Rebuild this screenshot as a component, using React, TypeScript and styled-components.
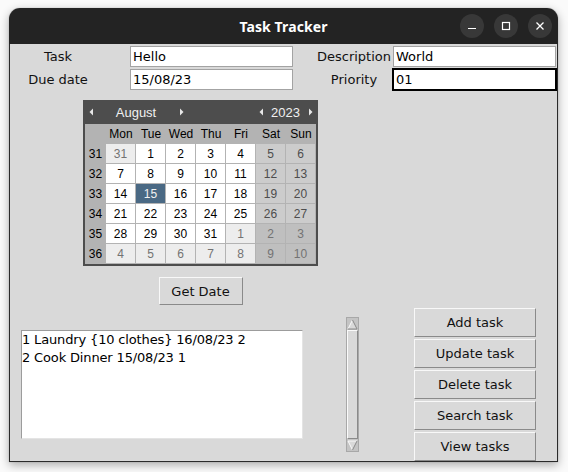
import React from "react";
import styled, { createGlobalStyle } from "styled-components";

const Global = createGlobalStyle`
  html, body { margin: 0; padding: 0; background: #ffffff; }
  body { width: 568px; height: 472px; overflow: hidden; }
  * { box-sizing: border-box; }
`;

const Page = styled.div`
  width: 568px;
  height: 472px;
  padding: 8px 0 0 9px;
  background: #fafafa;
`;

const Window = styled.div`
  width: 549px;
  height: 454px;
  display: flex;
  flex-direction: column;
  border-radius: 11px 11px 0 0;
  box-shadow: 0 3px 10px rgba(0, 0, 0, 0.32), 0 0 1px rgba(0, 0, 0, 0.4);
  overflow: hidden;
`;

const TitleBar = styled.div`
  height: 36px;
  flex: none;
  background: #232323;
  display: grid;
  grid-template-columns: 1fr auto 1fr;
  align-items: center;
`;

const Title = styled.div`
  grid-column: 2;
  color: #ffffff;
  font-family: "Noto Sans", "DejaVu Sans", sans-serif;
  font-weight: 700;
  font-size: 14px;
  letter-spacing: 0.1px;
`;

const Controls = styled.div`
  grid-column: 3;
  justify-self: end;
  display: flex;
  gap: 10px;
  padding-right: 6px;
`;

const CtrlButton = styled.div`
  width: 24px;
  height: 24px;
  border-radius: 50%;
  background: #383838;
  display: flex;
  align-items: center;
  justify-content: center;
`;

const Body = styled.div`
  flex: 1;
  background: #d9d9d9;
  border: 1px solid #2a2a2a;
  border-top: none;
  display: flex;
  flex-direction: column;
  font-family: "DejaVu Sans", sans-serif;
  font-size: 13px;
  color: #000;
`;

const Form = styled.div`
  margin-top: 1px;
  display: grid;
  grid-template-columns: 119px 165px 98px 165px;
  grid-template-rows: 23px 23px;
`;

const Label = styled.div<{ $side: "left" | "right" }>`
  display: flex;
  align-items: center;
  justify-content: center;
  padding: ${(p) => (p.$side === "left" ? "0 23px 0 0" : "0 0 0 22px")};
  white-space: nowrap;
  color: #111;
`;

const Entry = styled.div<{ $focused?: boolean }>`
  border: 1px solid ${(p) => (p.$focused ? "#000" : "#d9d9d9")};
  box-shadow: inset 0 0 0 1px ${(p) => (p.$focused ? "#000" : "#a3a3a3")};
  background: #fff;
  padding: 0 3px;
  display: flex;
  align-items: center;
  color: #000;
`;

const CalSection = styled.div`
  margin-top: 9px;
  padding-left: 73px;
  width: 308px;
  display: flex;
  flex-direction: column;
  align-items: center;
`;

const Calendar = styled.div`
  width: 235px;
  background: #4d4d4d;
  padding: 0 2px 2px 2px;
  font-family: "Liberation Sans", Arial, sans-serif;
`;

const CalHeader = styled.div`
  height: 24px;
  display: flex;
  align-items: center;
  color: #f0f0f0;
  font-size: 13px;
`;

const ArrowBox = styled.div`
  width: 12px;
  display: flex;
  justify-content: center;
  align-items: center;
`;

const MonthLabel = styled.div<{ $w: number }>`
  width: ${(p) => p.$w}px;
  text-align: center;
`;

const Spacer = styled.div`
  flex: 1;
`;

const CalGrid = styled.div`
  display: grid;
  grid-template-columns: 21px repeat(7, 30px);
  grid-template-rows: repeat(7, 20px);
  background: #b3b3b3;
  font-size: 12px;
`;

const HeadCell = styled.div`
  display: flex;
  align-items: center;
  justify-content: center;
  color: #000;
`;

type Kind = "normal" | "weekend" | "other" | "otherwe" | "selected";

const dayColors: Record<Kind, [string, string]> = {
  normal: ["#ffffff", "#000000"],
  weekend: ["#cccccc", "#4d4d4d"],
  other: ["#ededed", "#737373"],
  otherwe: ["#bfbfbf", "#737373"],
  selected: ["#4a6984", "#f2f2f2"],
};

const DayCell = styled.div<{ $kind: Kind }>`
  display: flex;
  align-items: center;
  justify-content: center;
  border-right: 1px solid #b3b3b3;
  border-bottom: 1px solid #b3b3b3;
  background: ${(p) => dayColors[p.$kind][0]};
  color: ${(p) => dayColors[p.$kind][1]};
  padding-top: 1px;
`;

const TkButton = styled.div<{ $w: number; $h: number }>`
  width: ${(p) => p.$w}px;
  height: ${(p) => p.$h}px;
  background: #d9d9d9;
  border: 1px solid;
  border-color: #f8f8f8 #8a8a8a #8a8a8a #f8f8f8;
  display: flex;
  align-items: center;
  justify-content: center;
  color: #111;
  white-space: nowrap;
`;

const GetDateWrap = styled.div`
  margin-top: 11px;
`;

const BottomRow = styled.div`
  margin-top: 3px;
  height: 153px;
  display: flex;
  align-items: center;
  padding-left: 11px;
`;

const ListBox = styled.div`
  width: 282px;
  height: 109px;
  background: #fff;
  border: 1px solid;
  border-color: #9c9c9c #e4e4e4 #e4e4e4 #9c9c9c;
  padding: 0 0;
  line-height: 18px;
  letter-spacing: -0.15px;
  color: #000;
  white-space: nowrap;
`;

const Scrollbar = styled.div`
  margin-left: 43px;
  width: 13px;
  height: 135px;
  border: 1px solid #a8a8a8;
  background: #c4c4c4;
  display: flex;
  flex-direction: column;
`;

const ScrollArrow = styled.div`
  height: 12px;
  flex: none;
  display: flex;
  align-items: center;
  justify-content: center;
`;

const ScrollThumb = styled.div`
  flex: 1;
  background: #d9d9d9;
  border: 1px solid;
  border-color: #fafafa #8a8a8a #8a8a8a #fafafa;
`;

const ButtonCol = styled.div`
  margin-left: 55px;
  display: flex;
  flex-direction: column;
  gap: 2px;
`;

const Tri = ({ dir }: { dir: "left" | "right" }) => (
  <svg width="5" height="8" viewBox="0 0 5 8">
    {dir === "left" ? (
      <polygon points="4,0.5 4,7.5 0.5,4" fill="#e8e8e8" />
    ) : (
      <polygon points="1,0.5 1,7.5 4.5,4" fill="#e8e8e8" />
    )}
  </svg>
);

const ScrollTri = ({ up }: { up: boolean }) => (
  <svg width="11" height="11" viewBox="0 0 11 11">
    {up ? (
      <>
        <polygon points="5.5,1 10,10 1,10" fill="#d9d9d9" />
        <polyline points="1,10 5.5,1" stroke="#fafafa" fill="none" strokeWidth="1" />
        <polyline points="5.5,1 10,10 1,10" stroke="#8a8a8a" fill="none" strokeWidth="1" />
      </>
    ) : (
      <>
        <polygon points="1,1 10,1 5.5,10" fill="#d9d9d9" />
        <polyline points="5.5,10 1,1 10,1" stroke="#fafafa" fill="none" strokeWidth="1" />
        <polyline points="10,1 5.5,10" stroke="#8a8a8a" fill="none" strokeWidth="1" />
      </>
    )}
  </svg>
);

type Cell = { d: number; k: Kind };

const weeks: { wk: number; days: Cell[] }[] = (() => {
  const rows: { wk: number; days: Cell[] }[] = [];
  let day = 31;
  let month = -1;
  for (let w = 0; w < 6; w++) {
    const days: Cell[] = [];
    for (let i = 0; i < 7; i++) {
      const we = i >= 5;
      let k: Kind;
      if (month === 0) k = we ? "weekend" : "normal";
      else k = we ? "otherwe" : "other";
      if (month === 0 && day === 15) k = "selected";
      days.push({ d: day, k });
      day++;
      if (month === -1 && day > 31) {
        day = 1;
        month = 0;
      } else if (month === 0 && day > 31) {
        day = 1;
        month = 1;
      }
    }
    rows.push({ wk: 31 + w, days });
  }
  return rows;
})();

const dayNames = ["Mon", "Tue", "Wed", "Thu", "Fri", "Sat", "Sun"];
const actions = ["Add task", "Update task", "Delete task", "Search task", "View tasks"];

export default function App() {
  return (
    <>
      <Global />
      <Page>
        <Window>
          <TitleBar>
            <Title>Task Tracker</Title>
            <Controls>
              <CtrlButton>
                <svg width="10" height="10" viewBox="0 0 10 10">
                  <line x1="1" y1="7.5" x2="9" y2="7.5" stroke="#fff" strokeWidth="1.2" />
                </svg>
              </CtrlButton>
              <CtrlButton>
                <svg width="10" height="10" viewBox="0 0 10 10">
                  <rect x="1.5" y="1.5" width="7" height="7" stroke="#fff" strokeWidth="1.2" fill="none" />
                </svg>
              </CtrlButton>
              <CtrlButton>
                <svg width="10" height="10" viewBox="0 0 10 10">
                  <path d="M1.5 1.5 L8.5 8.5 M8.5 1.5 L1.5 8.5" stroke="#fff" strokeWidth="1.3" />
                </svg>
              </CtrlButton>
            </Controls>
          </TitleBar>
          <Body>
            <Form>
              <Label $side="left">Task</Label>
              <Entry>Hello</Entry>
              <Label $side="right">Description</Label>
              <Entry>World</Entry>
              <Label $side="left">Due date</Label>
              <Entry>15/08/23</Entry>
              <Label $side="right">Priority</Label>
              <Entry $focused>01</Entry>
            </Form>
            <CalSection>
              <Calendar>
                <CalHeader>
                  <ArrowBox>
                    <Tri dir="left" />
                  </ArrowBox>
                  <MonthLabel $w={78}>August</MonthLabel>
                  <ArrowBox>
                    <Tri dir="right" />
                  </ArrowBox>
                  <Spacer />
                  <ArrowBox>
                    <Tri dir="left" />
                  </ArrowBox>
                  <MonthLabel $w={37}>2023</MonthLabel>
                  <ArrowBox>
                    <Tri dir="right" />
                  </ArrowBox>
                </CalHeader>
                <CalGrid>
                  <HeadCell />
                  {dayNames.map((n) => (
                    <HeadCell key={n}>{n}</HeadCell>
                  ))}
                  {weeks.map((w) => (
                    <React.Fragment key={w.wk}>
                      <HeadCell>{w.wk}</HeadCell>
                      {w.days.map((c, i) => (
                        <DayCell key={i} $kind={c.k}>
                          {c.d}
                        </DayCell>
                      ))}
                    </React.Fragment>
                  ))}
                </CalGrid>
              </Calendar>
              <GetDateWrap>
                <TkButton $w={84} $h={28}>Get Date</TkButton>
              </GetDateWrap>
            </CalSection>
            <BottomRow>
              <ListBox>
                <div>1 Laundry {"{10 clothes}"} 16/08/23 2</div>
                <div>2 Cook Dinner 15/08/23 1</div>
              </ListBox>
              <Scrollbar>
                <ScrollArrow>
                  <ScrollTri up />
                </ScrollArrow>
                <ScrollThumb />
                <ScrollArrow>
                  <ScrollTri up={false} />
                </ScrollArrow>
              </Scrollbar>
              <ButtonCol>
                {actions.map((a) => (
                  <TkButton key={a} $w={122} $h={29}>
                    {a}
                  </TkButton>
                ))}
              </ButtonCol>
            </BottomRow>
          </Body>
        </Window>
      </Page>
    </>
  );
}
